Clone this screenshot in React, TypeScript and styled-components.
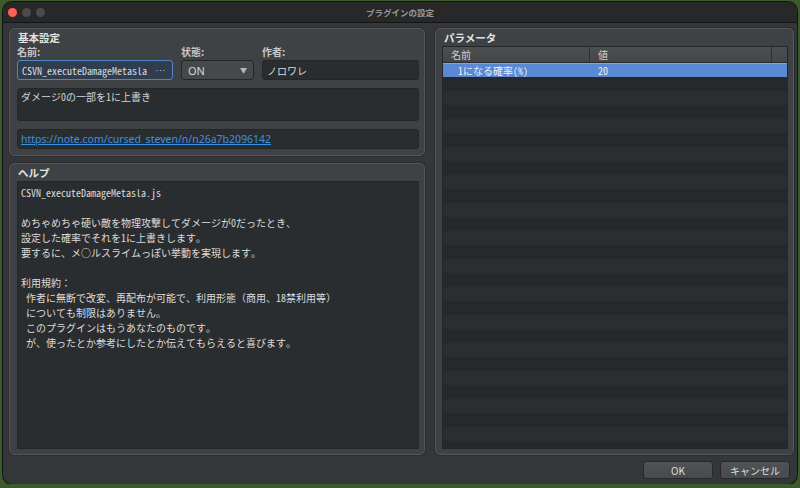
import React from "react";
import styled, { createGlobalStyle } from "styled-components";

const mono = `"Noto Sans Mono CJK JP", "Noto Sans CJK JP", "DejaVu Sans Mono", monospace`;
const sans = `"Noto Sans", "Noto Sans CJK JP", sans-serif`;

const GlobalStyle = createGlobalStyle`
  html, body {
    margin: 0;
    padding: 0;
    background: #3d5a2c;
  }
  body {
    font-family: ${mono};
    font-size: 10px;
    color: #d6d6d6;
  }
`;

const Page = styled.div`
  padding: 2px 0 0 3px;
`;

const Window = styled.div`
  display: flex;
  flex-direction: column;
  width: 794px;
  height: 482px;
  border-radius: 9px;
  background: #34373a;
  overflow: hidden;
  box-shadow: 0 0 0 1px #151515;
`;

const TitleBar = styled.div`
  display: grid;
  grid-template-columns: 1fr auto 1fr;
  align-items: center;
  height: 20px;
  background: #282828;
  border-bottom: 1px solid #151515;
`;

const Lights = styled.div`
  display: flex;
  gap: 5px;
  padding-left: 5px;
`;

const Light = styled.span<{ $c: string }>`
  width: 9px;
  height: 9px;
  border-radius: 50%;
  background: ${(p) => p.$c};
`;

const WindowTitle = styled.div`
  font-family: "Noto Sans CJK JP", sans-serif;
  font-size: 8.5px;
  font-weight: 700;
  color: #9a9a9a;
`;

const Content = styled.div`
  flex: 1;
  display: grid;
  grid-template-columns: 416px 359px;
  column-gap: 10px;
  padding: 5px 3px 0 6px;
  min-height: 0;
`;

const Column = styled.div`
  display: flex;
  flex-direction: column;
  gap: 7px;
  min-height: 0;
`;

const Group = styled.section<{ $h?: number }>`
  display: flex;
  flex-direction: column;
  ${(p) => (p.$h ? `height: ${p.$h}px;` : "flex: 1;")}
  box-sizing: border-box;
  padding: 0 5px 5px 6px;
  background: #3f4245;
  border: 1px solid #55585b;
  border-radius: 5px;
  box-shadow: 0 0 0 1px #2a2c2f;
  min-height: 0;
`;

const GroupTitle = styled.div`
  height: 17px;
  line-height: 17px;
  padding-left: 2px;
  font-family: "Noto Sans CJK JP", sans-serif;
  font-size: 10.5px;
  font-weight: 700;
  color: #e2e2e2;
`;

const FieldGrid = styled.div`
  display: grid;
  grid-template-columns: 156px 73px 1fr;
  column-gap: 8px;
  padding-left: 1px;
`;

const Label = styled.div`
  height: 14px;
  line-height: 12px;
  font-family: "Noto Sans CJK JP", sans-serif;
  font-size: 10px;
  font-weight: 700;
  color: #c8c8c8;
`;

const Field = styled.div<{ $focus?: boolean; $combo?: boolean }>`
  display: flex;
  align-items: center;
  justify-content: space-between;
  box-sizing: border-box;
  height: 20px;
  padding: 0 6px 0 4px;
  border-radius: 3px;
  border: 1px solid ${(p) => (p.$focus ? "#4f86c6" : "#24272a")};
  background: ${(p) => (p.$focus ? "#2f3d4e" : p.$combo ? "#46494c" : "#2a2d30")};
  color: #dcdcdc;
  white-space: nowrap;
  overflow: hidden;
`;

const ComboText = styled.span`
  padding-left: 2px;
  font-family: ${sans};
  font-size: 11px;
  color: #d6d6d6;
`;

const Dots = styled.span`
  font-family: "Liberation Sans", sans-serif;
  font-size: 9px;
  letter-spacing: 0.5px;
  color: #d8d8d8;
`;

const Arrow = styled.span`
  font-size: 7px;
  color: #b8b8b8;
`;

const Box = styled.div<{ $h: number }>`
  box-sizing: border-box;
  height: ${(p) => p.$h}px;
  margin: 8px 0 0 1px;
  padding: 0 3px;
  line-height: 15px;
  border-radius: 3px;
  border: 1px solid #24272a;
  background: #2a2d30;
  color: #d4d4d4;
`;

const LinkBox = styled(Box)`
  line-height: 18px;
`;

const Link = styled.a`
  font-family: ${sans};
  font-size: 10.5px;
  color: #3a92e0;
  text-decoration: underline;
`;

const HelpText = styled.div`
  flex: 1;
  margin-left: 1px;
  padding: 3px 3px;
  white-space: pre;
  line-height: 15px;
  border: 1px solid #24272a;
  background: #2a2d30;
  color: #dcdcdc;
  overflow: hidden;
`;

const Table = styled.div`
  flex: 1;
  display: flex;
  flex-direction: column;
  border: 1px solid #232528;
  background: #26292c;
  overflow: hidden;
`;

const cols = "147px 182px 1fr";

const HeaderRow = styled.div`
  display: grid;
  grid-template-columns: ${cols};
  height: 15px;
  background: linear-gradient(#4c4f52, #434649);
  border-bottom: 1px solid #2a2c2f;
`;

const HeaderCell = styled.div`
  padding-left: 8px;
  line-height: 15px;
  font-family: "Noto Sans CJK JP", sans-serif;
  font-size: 10px;
  color: #d0d0d0;
  border-right: 1px solid #2e3033;
  &:last-child {
    border-right: none;
  }
`;

const Row = styled.div<{ $selected?: boolean; $odd?: boolean }>`
  display: grid;
  grid-template-columns: ${cols};
  flex: none;
  height: 14px;
  line-height: 14px;
  box-sizing: border-box;
  background: ${(p) => (p.$selected ? "#5a88d3" : p.$odd ? "#2b2e31" : "#26292c")};
  ${(p) => (p.$selected ? "border-top: 1px solid #7da4e3; line-height: 13px;" : "")}
  color: ${(p) => (p.$selected ? "#eef3fb" : "#d0d0d0")};
`;

const Cell = styled.div<{ $indent?: number }>`
  padding-left: ${(p) => p.$indent ?? 8}px;
  white-space: nowrap;
`;

const Footer = styled.div`
  display: flex;
  justify-content: flex-end;
  gap: 7px;
  height: 29px;
  box-sizing: border-box;
  padding: 6px 7px 0 0;
`;

const Button = styled.button`
  width: 70px;
  height: 18px;
  padding: 0;
  border-radius: 3px;
  border: 1px solid #26282b;
  background: linear-gradient(#505356, #484b4e);
  font-family: "Noto Sans CJK JP", sans-serif;
  font-size: 10px;
  color: #dedede;
`;

const helpText = `CSVN_executeDamageMetasla.js

めちゃめちゃ硬い敵を物理攻撃してダメージが0だったとき、
設定した確率でそれを1に上書きします。
要するに、メ○ルスライムっぽい挙動を実現します。

利用規約：
 作者に無断で改変、再配布が可能で、利用形態（商用、18禁利用等）
 についても制限はありません。
 このプラグインはもうあなたのものです。
 が、使ったとか参考にしたとか伝えてもらえると喜びます。`;

const emptyRows = Array.from({ length: 28 }, (_, i) => i);

export default function App() {
  return (
    <>
      <GlobalStyle />
      <Page>
        <Window>
          <TitleBar>
            <Lights>
              <Light $c="#fe5f57" />
              <Light $c="#4b4b4b" />
              <Light $c="#4b4b4b" />
            </Lights>
            <WindowTitle>プラグインの設定</WindowTitle>
            <div />
          </TitleBar>

          <Content>
            <Column>
              <Group $h={128}>
                <GroupTitle>基本設定</GroupTitle>
                <FieldGrid>
                  <Label>名前:</Label>
                  <Label>状態:</Label>
                  <Label>作者:</Label>
                  <Field $focus>
                    <span>CSVN_executeDamageMetasla</span>
                    <Dots>···</Dots>
                  </Field>
                  <Field $combo>
                    <ComboText>ON</ComboText>
                    <Arrow>▼</Arrow>
                  </Field>
                  <Field>
                    <span>ノロワレ</span>
                  </Field>
                </FieldGrid>
                <Box $h={33}>ダメージ0の一部を1に上書き</Box>
                <LinkBox $h={20}>
                  <Link href="#">https://note.com/cursed_steven/n/n26a7b2096142</Link>
                </LinkBox>
              </Group>

              <Group>
                <GroupTitle>ヘルプ</GroupTitle>
                <HelpText>{helpText}</HelpText>
              </Group>
            </Column>

            <Group>
              <GroupTitle>パラメータ</GroupTitle>
              <Table>
                <HeaderRow>
                  <HeaderCell>名前</HeaderCell>
                  <HeaderCell>値</HeaderCell>
                  <HeaderCell />
                </HeaderRow>
                <Row $selected>
                  <Cell $indent={15}>1になる確率(%)</Cell>
                  <Cell>20</Cell>
                  <Cell />
                </Row>
                {emptyRows.map((i) => (
                  <Row key={i} $odd={i % 2 === 1} />
                ))}
              </Table>
            </Group>
          </Content>

          <Footer>
            <Button>OK</Button>
            <Button>キャンセル</Button>
          </Footer>
        </Window>
      </Page>
    </>
  );
}
